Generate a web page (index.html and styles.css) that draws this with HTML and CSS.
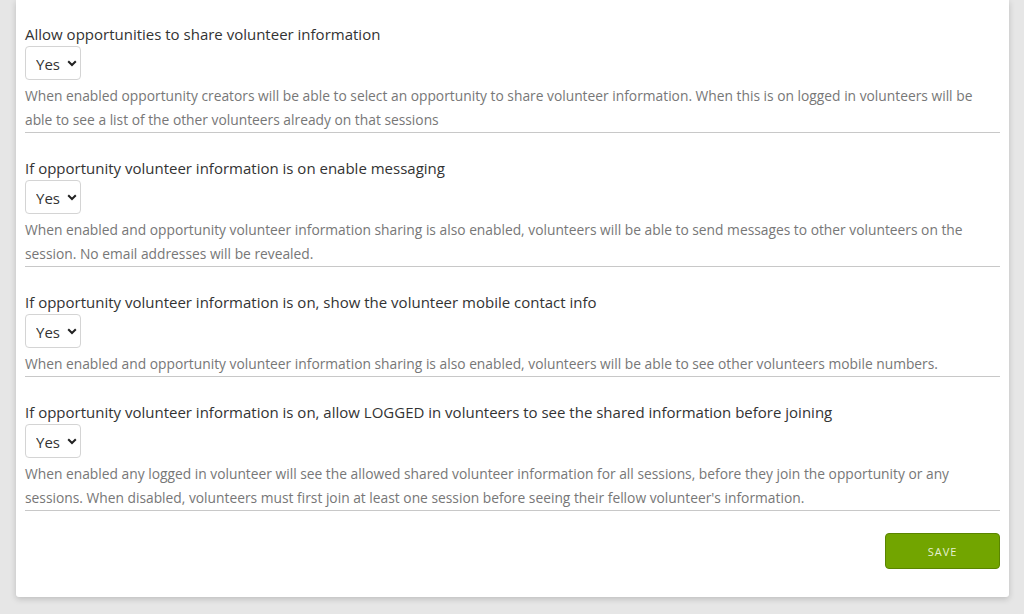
FILE: index.html
```html
<!DOCTYPE html>
<html lang="en">
<head>
    <meta charset="UTF-8">
    <meta name="viewport" content="width=device-width, initial-scale=1.0">
    <title>Volunteer settings</title>
    <link rel="stylesheet" href="styles.css">
</head>
<body>
    <div class="card">
        <div class="setting">
            <label for="shareInfo">Allow opportunities to share volunteer information</label>
            <div class="select-wrap">
                <select id="shareInfo">
                    <option>Yes</option>
                    <option>No</option>
                </select>
            </div>
            <p class="help">When enabled opportunity creators will be able to select an opportunity to share volunteer information. When this is on logged in volunteers will be able to see a list of the other volunteers already on that sessions</p>
        </div>

        <div class="setting">
            <label for="messaging">If opportunity volunteer information is on enable messaging</label>
            <div class="select-wrap">
                <select id="messaging">
                    <option>Yes</option>
                    <option>No</option>
                </select>
            </div>
            <p class="help">When enabled and opportunity volunteer information sharing is also enabled, volunteers will be able to send messages to other volunteers on the session. No email addresses will be revealed.</p>
        </div>

        <div class="setting">
            <label for="mobile">If opportunity volunteer information is on, show the volunteer mobile contact info</label>
            <div class="select-wrap">
                <select id="mobile">
                    <option>Yes</option>
                    <option>No</option>
                </select>
            </div>
            <p class="help">When enabled and opportunity volunteer information sharing is also enabled, volunteers will be able to see other volunteers mobile numbers.</p>
        </div>

        <div class="setting">
            <label for="beforeJoin">If opportunity volunteer information is on, allow LOGGED in volunteers to see the shared information before joining</label>
            <div class="select-wrap">
                <select id="beforeJoin">
                    <option>Yes</option>
                    <option>No</option>
                </select>
            </div>
            <p class="help">When enabled any logged in volunteer will see the allowed shared volunteer information for all sessions, before they join the opportunity or any sessions. When disabled, volunteers must first join at least one session before seeing their fellow volunteer's information.</p>
        </div>

        <div class="actions">
            <button class="save-btn">Save</button>
        </div>
    </div>
</body>
</html>
```

FILE: styles.css
```css
* {
    box-sizing: border-box;
    margin: 0;
    padding: 0;
}

body {
    font-family: "Open Sans", "Noto Sans", sans-serif;
    background-color: #e6e6e6;
    height: 614px;
    overflow: hidden;
}

.card {
    margin-left: 16px;
    width: 993px;
    background-color: #fff;
    padding: 23px 9px 28px 9px;
    border-radius: 0 0 3px 3px;
    box-shadow: 0 2px 6px rgba(0, 0, 0, 0.18);
}

.setting {
    margin-bottom: 24px;
}

.setting label {
    display: block;
    font-size: 15px;
    line-height: 22px;
    color: #333;
}

.select-wrap {
    margin-top: 1px;
    margin-bottom: 4px;
}

.select-wrap select {
    display: block;
    appearance: none;
    -webkit-appearance: none;
    font-family: "Open Sans", "Noto Sans", sans-serif;
    font-size: 15px;
    color: #333;
    width: 56px;
    height: 34px;
    padding: 1px 0 0 10px;
    border: 1px solid #d4d4d4;
    border-radius: 4px;
    background-color: #fff;
    background-image: url("data:image/svg+xml;utf8,<svg xmlns='http://www.w3.org/2000/svg' width='10' height='7' viewBox='0 0 10 7'><path d='M1.2 1.2 L5 5 L8.8 1.2' fill='none' stroke='%23222' stroke-width='2'/></svg>");
    background-repeat: no-repeat;
    background-position: right 3px center;
}

.help {
    font-size: 13.8px;
    line-height: 24px;
    color: #777;
    border-bottom: 1px solid #c8c8c8;
}

.actions {
    display: flex;
    justify-content: flex-end;
    margin-top: -2px;
}

.save-btn {
    width: 115px;
    height: 36px;
    background-color: #72a500;
    border: 1px solid #5a8500;
    border-radius: 4px;
    color: #e6f0d2;
    font-family: "Open Sans", "Noto Sans", sans-serif;
    font-size: 11px;
    letter-spacing: 1px;
    text-transform: uppercase;
    cursor: pointer;
}

.save-btn:hover {
    background-color: #62900a;
}
```
